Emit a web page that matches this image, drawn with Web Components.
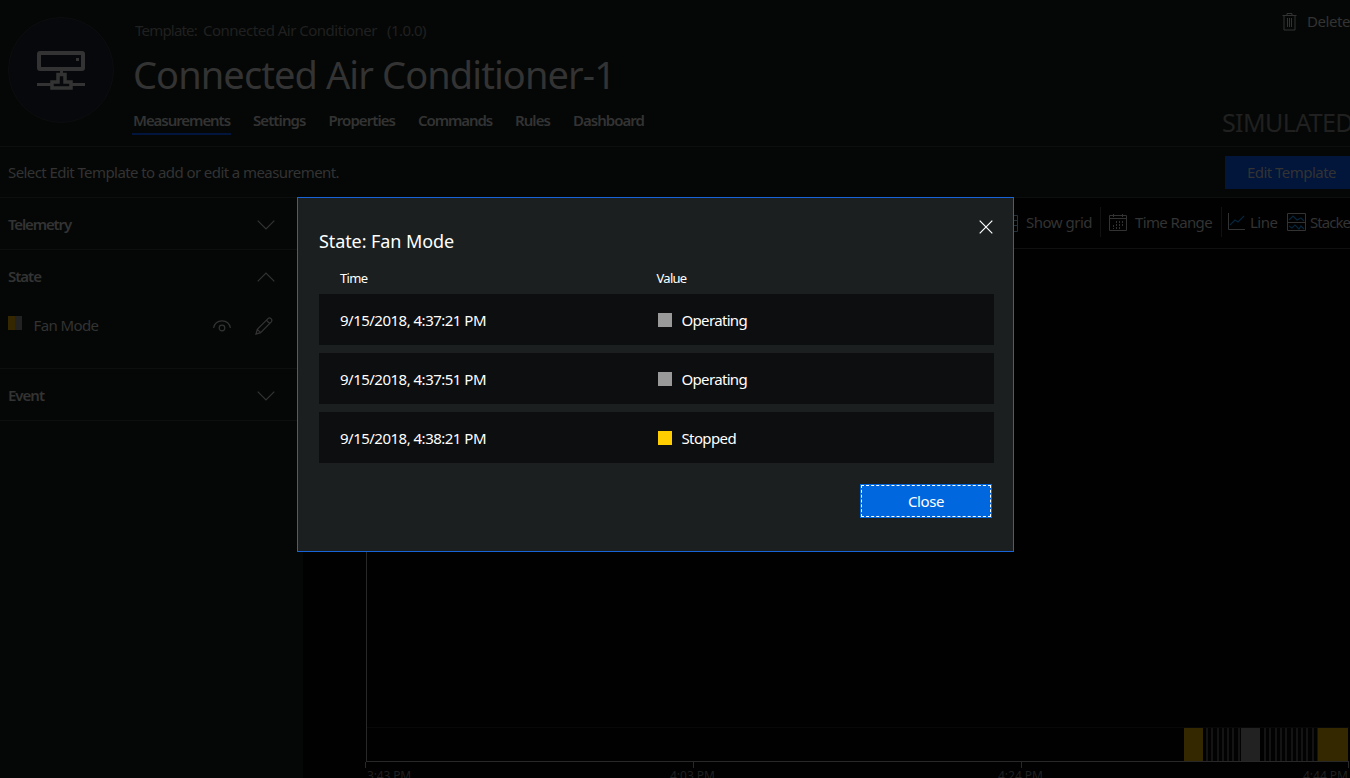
<!DOCTYPE html>
<html lang="en">
<head>
<meta charset="utf-8">
<title>Connected Air Conditioner-1</title>
<style>
html,body{margin:0;height:100%;background:#010101;overflow:hidden}
body{font-family:"Noto Sans","Open Sans",sans-serif;font-size:15px;color:#333}
</style>
</head>
<body>
<device-page></device-page>
<script>
const define = (name, html, setup) => customElements.define(name, class extends HTMLElement {
  connectedCallback() {
    if (this.shadowRoot) return;
    const root = this.attachShadow({mode: 'open'});
    const t = document.createElement('template');
    t.innerHTML = html;
    root.append(t.content.cloneNode(true));
    if (setup) setup.call(this, root);
  }
});

/* One line of text, tracked so that it fills the width given by "w". */
define('ui-label', `<style>
:host{display:block;flex:none;white-space:pre;line-height:20px;height:20px}
span{display:inline-block}
</style><span><slot></slot></span>`, function (root) {
  const span = root.querySelector('span');
  const w = +this.getAttribute('w');
  const natural = span.getBoundingClientRect().width;
  span.style.letterSpacing = (w - natural) / this.textContent.length + 'px';
  this.style.width = w + 'px';
});

define('device-icon', `<style>
:host{display:flex;flex:none;box-sizing:border-box;width:106px;height:106px;margin-top:1px;border:1px solid #0b0d0e;border-radius:50%;background:#07080b;align-items:center;justify-content:center}
svg{display:block}
</style>
<svg width="48" height="39" viewBox="0 0 48 39" fill="none" stroke="#333" stroke-width="4">
<rect x="2" y="2" width="44" height="16" rx="1"/><path stroke-width="3" d="M0 33.5h14M35 33.5h13M24.500 19v4"/><path stroke-width="3.500" d="M15 37V31h6v-7.500h7V31h6v6z"/>
<rect x="39" y="7" width="3" height="3" fill="#333" stroke="none"/></svg>`);

define('page-header', `<style>
:host{display:flex;flex:none;box-sizing:border-box;height:147px;padding:16px 0 0 8px;background:#050706;border-bottom:1px solid #0d0f0f}
.info{margin-left:21px;padding-top:4px;flex:1}
.template{display:flex;color:#202020}
.template ui-label{margin-right:6px}
.template ui-label:nth-child(2){margin-right:10px}
.title{font-size:38px;margin:24px 0 26px -2px}
nav{display:flex;gap:23px;font-weight:600;margin-left:-2px}
.on{position:relative}
.on::after{content:"";position:absolute;left:-1px;right:-1px;bottom:-5px;height:2px;background:#02153c}
.side{width:128px;flex:none;display:flex;flex-direction:column;margin-top:-6px;overflow:hidden}
.delete{display:flex;margin-left:60px;gap:10px}
.delete svg{margin-top:3px;flex:none}
.delete ui-label{margin-top:1px}
.sim{font-size:25px;color:#202020;margin-top:81px}
</style>
<device-icon></device-icon>
<div class="info">
<div class="template"><ui-label w="62">Template:</ui-label><ui-label w="174">Connected Air Conditioner</ui-label><ui-label w="39">(1.0.0)</ui-label></div>
<ui-label class="title" w="482">Connected Air Conditioner-1</ui-label>
<nav><ui-label class="on" w="97">Measurements</ui-label><ui-label w="52.500">Settings</ui-label><ui-label w="66.500">Properties</ui-label><ui-label w="74">Commands</ui-label><ui-label w="35">Rules</ui-label><ui-label w="71">Dashboard</ui-label></nav>
</div>
<div class="side">
<div class="delete"><svg width="15" height="18" viewBox="0 0 15 18" fill="none" stroke="#333"><path d="M.5 2.500h14M5 2.500v-2h5v2M2 2.500v14.500h11V2.500M5.500 5v9M7.500 5v9M9.500 5v9"/></svg><ui-label w="43">Delete</ui-label></div>
<ui-label class="sim" w="131">SIMULATED</ui-label>
</div>`);

define('edit-bar', `<style>
:host{display:flex;flex:none;box-sizing:border-box;height:51px;align-items:center;justify-content:space-between;padding-left:8px;background:#050706;border-bottom:1px solid #0d0f0f}
button{all:unset;box-sizing:border-box;display:flex;align-items:center;width:125px;height:33px;padding-left:22px;background:#02153a}
</style><ui-label w="331">Select Edit Template to add or edit a measurement.</ui-label><button><ui-label w="89">Edit Template</ui-label></button>`);

define('side-section', `<style>
:host{display:block;border-bottom:1px solid #0d0f0f}
header{display:flex;justify-content:space-between;height:51px;align-items:center;padding:1px 28px 0 8px;font-weight:600;box-sizing:border-box}
svg{display:block;margin-top:1px}
:host([open]) svg{transform:scaleY(-1)}
</style><header><slot name="title"></slot><svg width="18" height="10" viewBox="0 0 18 10" fill="none" stroke="#333" stroke-width="1.200"><path d="M.7.700 9 9 17.300.7"/></svg></header><slot></slot>`);

define('side-bar', `<style>
:host{display:block;width:303px;flex:none;background:#050706}
.item{display:flex;height:67px;box-sizing:border-box;padding:14px 30px 0 8px}
i{width:14px;height:14px;margin:1px 12px 0 0;background:linear-gradient(90deg,#352800 50%,#222 50%)}
.item ui-label{margin-left:-.5px}
.eye{margin:5px 24px 0 auto}
.pen{margin-top:2px}
</style>
<side-section><ui-label slot="title" w="63">Telemetry</ui-label></side-section>
<side-section open><ui-label slot="title" w="33">State</ui-label>
<div class="item"><i></i><ui-label w="65">Fan Mode</ui-label>
<svg class="eye" width="18" height="12" viewBox="0 0 18 12" fill="none" stroke="#333" stroke-width="1.200"><path d="M.6 8C1.500 3 5 .8 9 .8S16.500 3 17.400 8"/><circle cx="9" cy="8" r="2.800"/></svg>
<svg class="pen" width="18" height="18" viewBox="0 0 18 18" fill="none" stroke="#333" stroke-width="1.200"><path d="M1 17l1.300-4.700L13 1.600c2-2 5 1 3.300 3.200L5.600 15.600zM2.300 12.300l3.300 3.300M11.400 3.200l3.300 3.300"/></svg></div></side-section>
<side-section><ui-label slot="title" w="36">Event</ui-label></side-section>`);

define('tool-bar', `<style>
:host{display:flex;height:51px;flex:none;box-sizing:border-box;border-bottom:1px solid #101010;padding-left:697px;align-items:flex-start;overflow:hidden}
ui-label{margin-top:14px}
svg{flex:none}
hr{flex:none;width:1px;height:30px;border:0;background:#111;margin:9px 8px 0}
</style>
<svg style="margin:17px 8px 0 0" width="18" height="17" viewBox="0 0 18 17" fill="none" stroke="#24303a"><path d="M.5.500h17v16H.5zM0 5.500h18M0 10.500h18M6.500 0v17M12.500 0v17"/></svg><ui-label w="66">Show grid</ui-label><hr>
<svg style="margin:16px 8px 0 0" width="18" height="17" viewBox="0 0 18 17" fill="none" stroke="#333"><path d="M.5 1.500h17v15H.5zM0 4.500h18M4.500 0v3M13.500 0v3"/><path stroke-dasharray="2 1" d="M4.500 11v4M7.500 7v8M10.500 7v8M13.500 7v6"/></svg><ui-label w="77">Time Range</ui-label><hr style="margin-left:9px">
<svg style="margin:15px 5px 0 -2px" width="17" height="17" viewBox="0 0 17 17" fill="none"><path stroke="#333" d="M.5 0v16.500H17"/><path stroke="#05253d" stroke-width="1.200" d="M2 12l5-5 3 2 6-6"/></svg><ui-label w="27.500">Line</ui-label>
<svg style="margin:15px 4px 0 9.500px" width="19" height="18" viewBox="0 0 19 18" fill="none"><path stroke="#333" d="M.5.500h18v17H.5zM0 9.500h19"/><path stroke="#05253d" stroke-width="1.200" d="M2 7l4-4 4 4 4-2 3 3M2 13l3 2 3-3 4 4 2-3 3 3"/></svg><ui-label w="40">Stacke</ui-label>`);

define('state-chart', `<style>
:host{display:flex;flex-direction:column;flex:1;min-height:0;padding-left:62px;overflow:hidden}
.plot{flex:none;box-sizing:border-box;width:983px;height:513px;margin-left:1px;border-left:1px solid #282828;border-bottom:1px solid #282828;display:flex;flex-direction:column;justify-content:flex-end}
.band{display:flex;height:34px;box-sizing:border-box;border-top:1px solid #080808;padding-left:817px}
.band b{height:33px;flex:none}
.y{background:#332800}.g{background:#222}
.s{background:repeating-linear-gradient(90deg,#141414 0 2px,#020202 2px 5.300px)}
.axis{display:flex;justify-content:space-between;flex:none;width:984px;height:6px}
.axis i{width:1px;background:#282828}
.labels{display:flex;color:#202020;font-size:12px;margin-left:2px}
ui-label{margin-top:-2px}
</style><div class="plot"><div class="band"><b class="y" style="width:19px"></b><b class="s" style="width:35px;margin-left:3px"></b><b class="g" style="width:19px"></b><b class="s" style="width:54px;margin-left:4px"></b><b class="y" style="width:30px"></b></div></div>
<div class="axis"><i></i><i style="margin-left:1px"></i><i></i><i></i></div>
<div class="labels"><ui-label w="44">3:43 PM</ui-label><ui-label style="margin-left:259px" w="45">4:03 PM</ui-label><ui-label style="margin-left:283px" w="45">4:24 PM</ui-label><ui-label style="margin-left:260px" w="45">4:44 PM</ui-label></div>`);

define('state-row', `<style>
:host{display:flex;height:51px;box-sizing:border-box;background:#0d0e10;padding:16px 0 0 21px;margin-bottom:8px}
i{width:14px;height:14px;margin:3px 9.500px 0 172px;background:var(--swatch)}
</style><slot name="time"></slot><i></i><slot></slot>`);

define('state-dialog', `<style>
:host{position:absolute;left:297px;top:197px;width:717px;height:355px;box-sizing:border-box;border:1px solid #1863d8;background:#1b1f20;color:#fff;padding:22px 19px 0 21px;display:flex;flex-direction:column}
.top{display:flex;justify-content:space-between}
.title{font-size:18px;margin-top:11px}
.x{margin:0 1px 0 0}
.cols{display:flex;font-size:13px;margin:17px 0 6px 21px;gap:289px}
button{all:unset;box-sizing:border-box;width:132px;height:34px;background:#0067df;align-self:flex-end;margin:13px 2px 0 0;border:1px solid #0067df;display:flex}
button span{box-sizing:border-box;width:130px;height:32px;border:1px dashed #fff;padding:5px 0 0 46px}
</style>
<div class="top"><ui-label class="title" w="135">State: Fan Mode</ui-label><svg class="x" width="14" height="14" viewBox="0 0 14 14" stroke="#fff" stroke-width="1.200"><path d="M.7.700l12.600 12.600M13.300.7.700 13.300"/></svg></div>
<div class="cols"><ui-label w="27.500">Time</ui-label><ui-label w="30">Value</ui-label></div>
<state-row style="--swatch:#999"><ui-label slot="time" w="146">9/15/2018, 4:37:21 PM</ui-label><ui-label w="65.500">Operating</ui-label></state-row>
<state-row style="--swatch:#999"><ui-label slot="time" w="146">9/15/2018, 4:37:51 PM</ui-label><ui-label w="65.500">Operating</ui-label></state-row>
<state-row style="--swatch:#ffcd00"><ui-label slot="time" w="146">9/15/2018, 4:38:21 PM</ui-label><ui-label w="54.500">Stopped</ui-label></state-row>
<button><span><ui-label w="36">Close</ui-label></span></button>`);

define('device-page', `<style>
:host{display:flex;flex-direction:column;position:relative;width:1350px;height:778px;overflow:hidden}
.body{display:flex;flex:1;min-height:0}
main{flex:1;min-width:0;display:flex;flex-direction:column}
</style><page-header></page-header><edit-bar></edit-bar><div class="body"><side-bar></side-bar><main><tool-bar></tool-bar><state-chart></state-chart></main></div><state-dialog></state-dialog>`);
</script>
</body>
</html>
